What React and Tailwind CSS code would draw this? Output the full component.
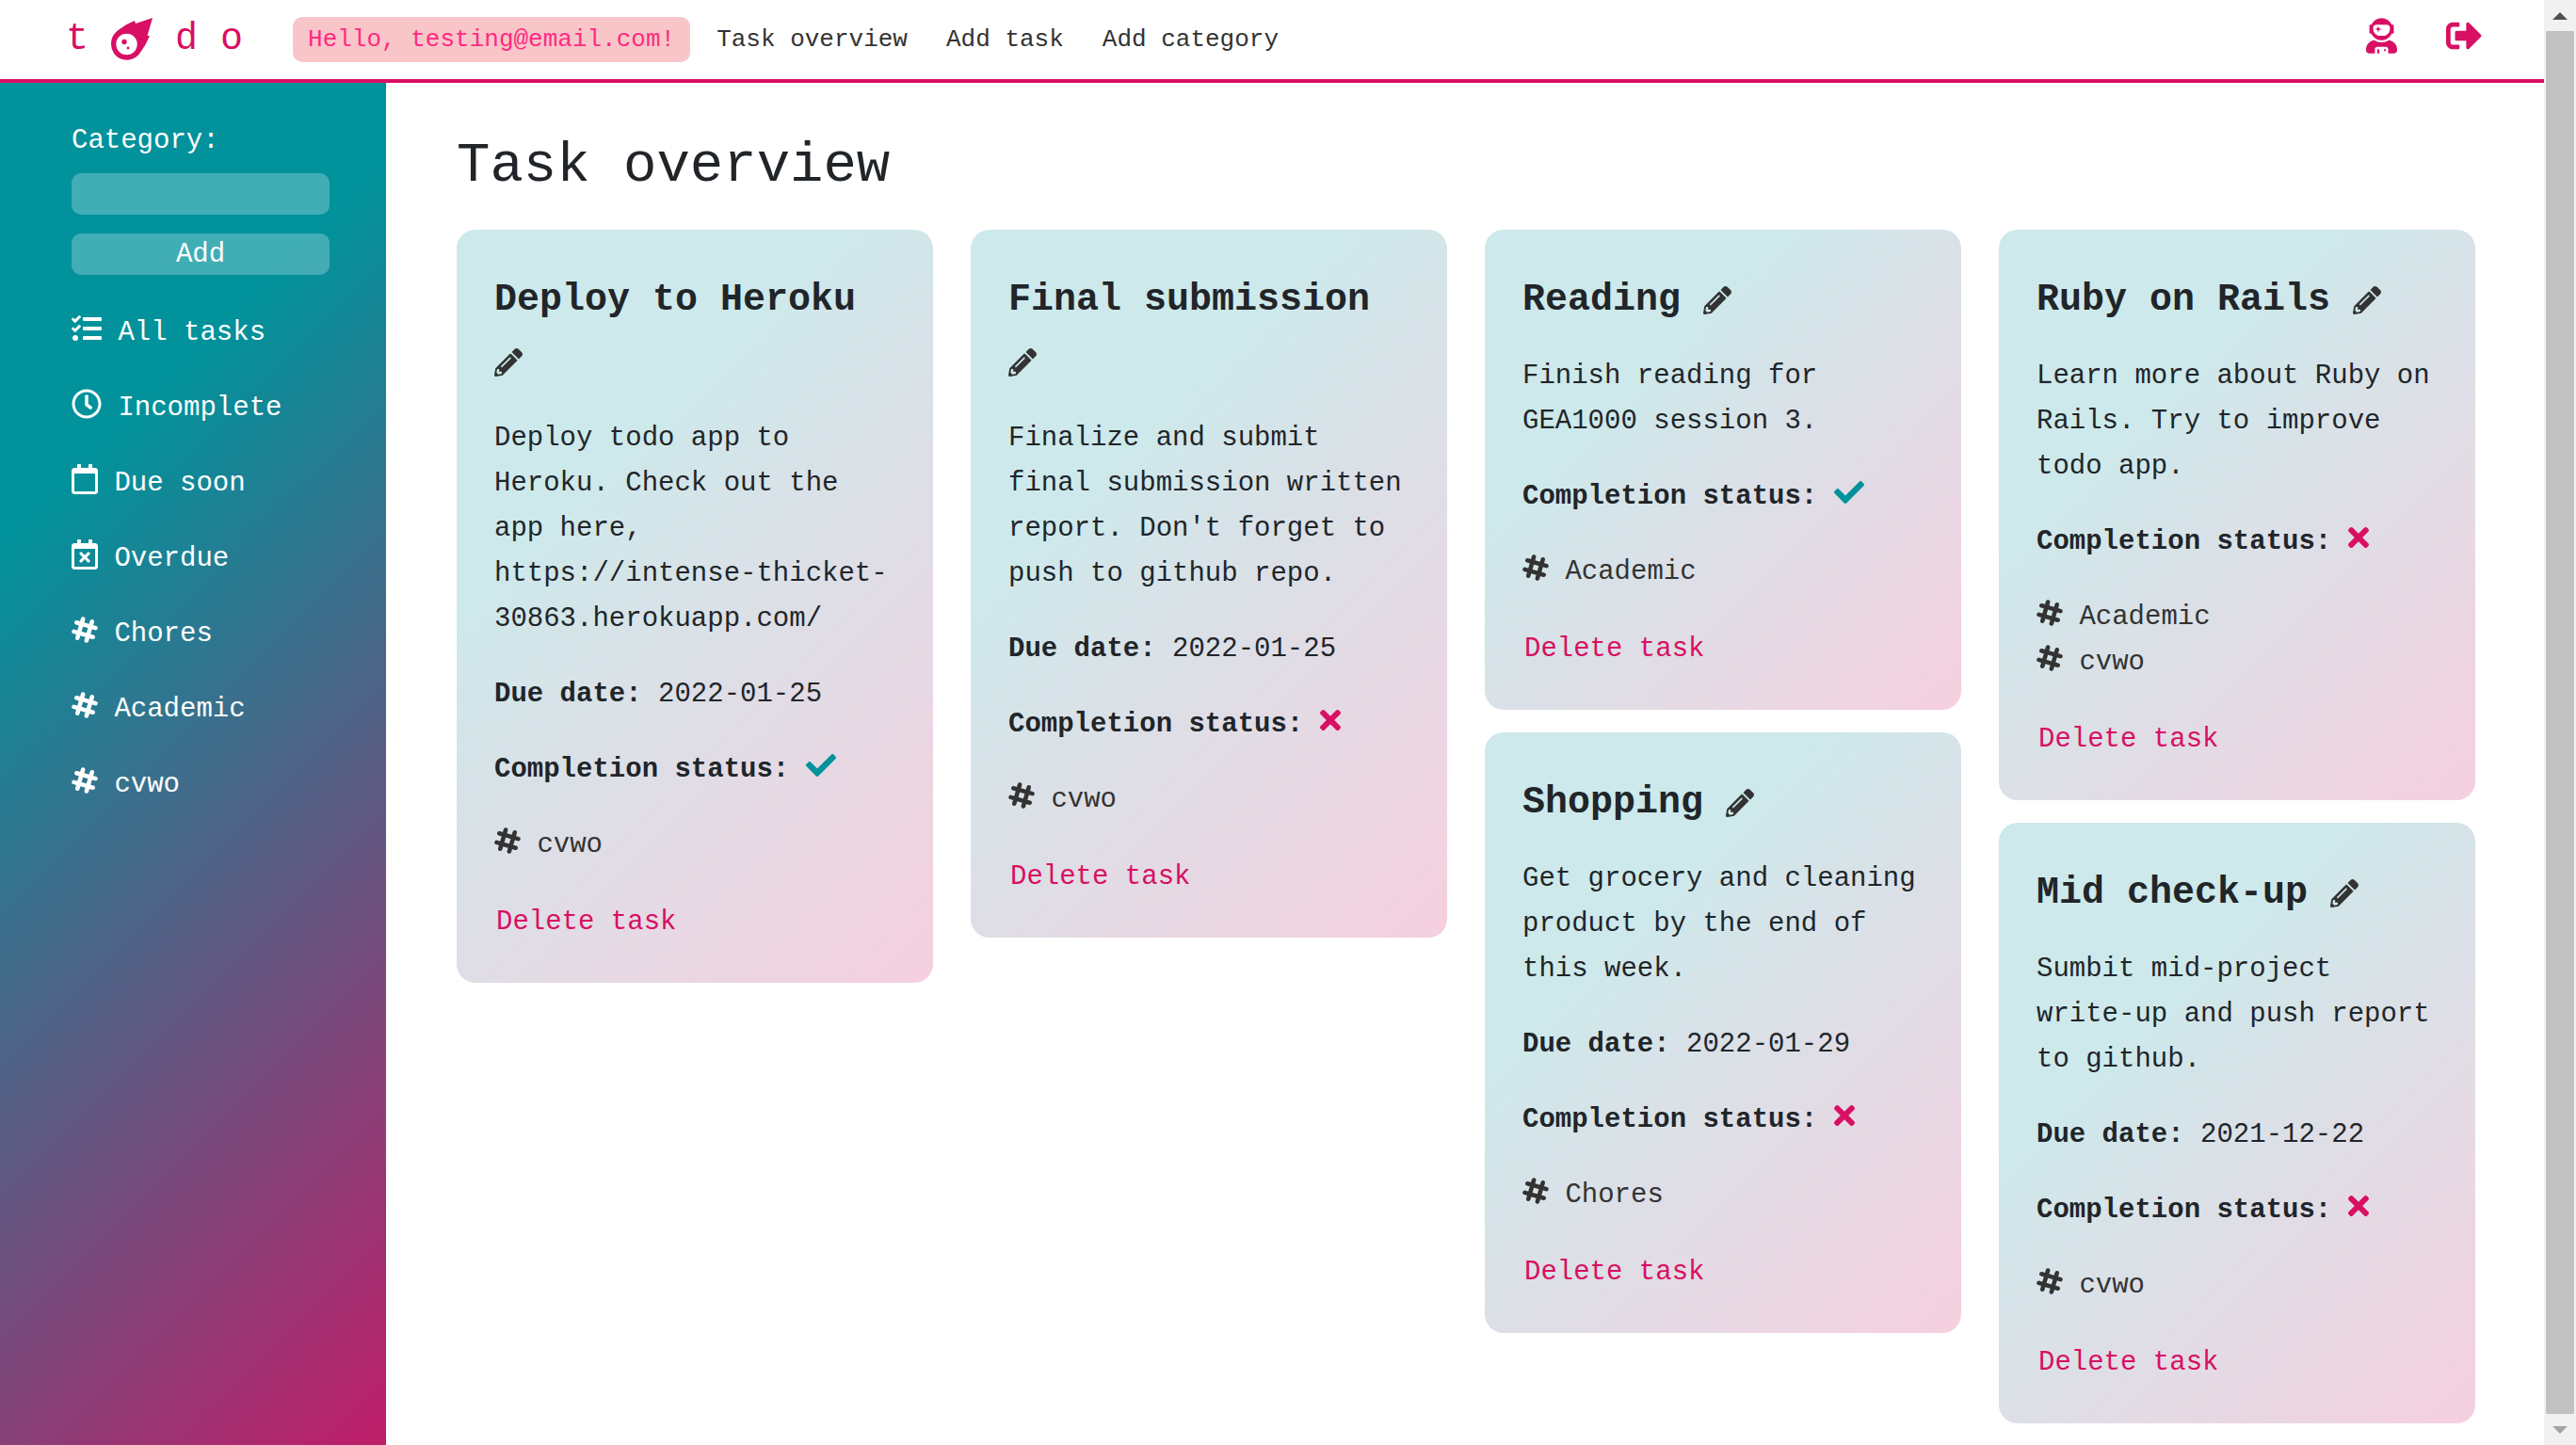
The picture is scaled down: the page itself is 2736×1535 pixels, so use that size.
import { FaCheck, FaPencilAlt, FaRegCalendar, FaRegCalendarTimes, FaRegClock, FaSignOutAlt, FaTasks, FaTimes, FaUserAstronaut } from "react-icons/fa";

const columns = [
  [
    {
      title: "Deploy to Heroku",
      text: "Deploy todo app to Heroku. Check out the app here, https://intense-thicket-30863.herokuapp.com/",
      due: "2022-01-25",
      done: true,
      tags: ["cvwo"],
    },
  ],
  [
    {
      title: "Final submission",
      text: "Finalize and submit final submission written report. Don't forget to push to github repo.",
      due: "2022-01-25",
      done: false,
      tags: ["cvwo"],
    },
  ],
  [
    { title: "Reading", text: "Finish reading for GEA1000 session 3.", done: true, tags: ["Academic"] },
    {
      title: "Shopping",
      text: "Get grocery and cleaning product by the end of this week.",
      due: "2022-01-29",
      done: false,
      tags: ["Chores"],
    },
  ],
  [
    {
      title: "Ruby on Rails",
      text: "Learn more about Ruby on Rails. Try to improve todo app.",
      done: false,
      tags: ["Academic", "cvwo"],
    },
    {
      title: "Mid check-up",
      text: "Sumbit mid-project write-up and push report to github.",
      due: "2021-12-22",
      done: false,
      tags: ["cvwo"],
    },
  ],
];

const iconBase = "inline-block align-[-4px]";

function HashIcon({ className }) {
  return (
    <svg viewBox="0 0 28 32" aria-hidden="true" className={className} fill="none" stroke="currentColor" strokeWidth="4.6" strokeLinecap="round">
      <g transform="rotate(16 14 16)">
        <path d="M3.500 11H24.500M3.500 21H24.500M9 5.500V26.500M19 5.500V26.500" />
      </g>
    </svg>
  );
}

const filters = [
  { label: "All tasks", Icon: FaTasks, size: "h-8 w-8" },
  { label: "Incomplete", Icon: FaRegClock, size: "h-8 w-8" },
  { label: "Due soon", Icon: FaRegCalendar, size: "h-8 w-7" },
  { label: "Overdue", Icon: FaRegCalendarTimes, size: "h-8 w-7" },
  { label: "Chores", Icon: HashIcon, size: "h-8 w-7" },
  { label: "Academic", Icon: HashIcon, size: "h-8 w-7" },
  { label: "cvwo", Icon: HashIcon, size: "h-8 w-7" },
];

function Meteor() {
  return (
    <svg viewBox="0 0 44 46" aria-hidden="true" className="h-[46px] w-11" fill="#d80f63">
      <path d="M25 3 L26 6 L44 0 L38.500 19 L41 19 Q37 29 30.500 37.500 A16.700 16.700 0 0 1 0 28 C0 20 4 15.500 9 12 Q17 6 25 3Z" />
      <circle cx="16.500" cy="28" r="11.200" fill="#fff" />
      <circle cx="14" cy="25.500" r="2.700" />
      <circle cx="18" cy="32" r="1.400" />
    </svg>
  );
}

function Header() {
  return (
    <header className="flex h-[88px] items-center border-b-4 border-[#d80f63] pr-[66px] pl-[70px] text-[26px] leading-[48px]">
      <a href="#home" aria-label="todo" className="flex items-center text-[40px] text-[#d80f63]">
        <span>t</span>
        <span className="mx-6">
          <Meteor />
        </span>
        <span>d</span>
        <span className="ml-6">o</span>
      </a>
      <p className="ml-[53px] rounded-[10px] bg-[#f8c5c9] px-4 text-[#ff2a80]">Hello, testing@email.com!</p>
      <nav className="ml-7 flex gap-[41px] text-[#333]">
        <a href="#overview">Task overview</a>
        <a href="#add-task">Add task</a>
        <a href="#add-category">Add category</a>
      </nav>
      <div className="ml-auto flex gap-[52px] pb-2 text-[#d80f63]">
        <a href="#profile" aria-label="Profile">
          <FaUserAstronaut className="h-[38px] w-[33px]" />
        </a>
        <a href="#logout" aria-label="Log out">
          <FaSignOutAlt className="h-[38px] w-[38px]" />
        </a>
      </div>
    </header>
  );
}

function Sidebar() {
  return (
    <aside className="w-[410px] shrink-0 bg-[linear-gradient(135deg,#02929b_27%,#d80f63_109%)] pt-[38px] pr-[60px] pl-[76px] text-white">
      <form className="flex flex-col" onSubmit={(e) => e.preventDefault()}>
        <label htmlFor="category">Category:</label>
        <input id="category" type="text" className="mt-[10px] h-11 rounded-[10px] bg-white/25 px-3 outline-none" />
        <button type="submit" className="mt-5 h-11 rounded-[10px] bg-white/25 leading-[46px]">
          Add
        </button>
      </form>
      <ul className="mt-[38px] flex flex-col gap-8">
        {filters.map(({ label, Icon, size }) => (
          <li key={label}>
            <a href={`#${label}`}>
              <Icon aria-hidden="true" className={`${iconBase} ${size}`} /> {label}
            </a>
          </li>
        ))}
      </ul>
    </aside>
  );
}

function TaskCard({ task }) {
  return (
    <article className="flex flex-col gap-8 rounded-[20px] bg-[linear-gradient(135deg,#cde9eb_30%,#f6cfdf)] px-10 pt-[42px] pb-[38px]">
      <div>
        <h2 className="mb-6 text-[40px] leading-[66px] font-bold">
          {task.title}{" "}
          <a href="#edit" aria-label={`Edit ${task.title}`} className="text-[#333]">
            <FaPencilAlt aria-hidden="true" className="inline-block h-[30px] w-[30px] align-[-5px]" />
          </a>
        </h2>
        <p>{task.text}</p>
      </div>
      {task.due && (
        <p>
          <strong>Due date:</strong> {task.due}
        </p>
      )}
      <p>
        <strong>Completion status:</strong>{" "}
        {task.done ? (
          <FaCheck role="img" aria-label="Complete" className={`${iconBase} h-8 w-8 text-[#02929b]`} />
        ) : (
          <FaTimes role="img" aria-label="Incomplete" className={`${iconBase} h-8 w-[22px] text-[#d80f63]`} />
        )}
      </p>
      <ul>
        {task.tags.map((tag) => (
          <li key={tag}>
            <a href={`#${tag}`} className="text-[#333]">
              <HashIcon className={`${iconBase} h-8 w-7`} /> {tag}
            </a>
          </li>
        ))}
      </ul>
      <button type="button" className="self-start px-0.5 py-0.5 text-[#d80f63]">
        Delete task
      </button>
    </article>
  );
}

function Scrollbar() {
  return (
    <div aria-hidden="true" className="flex w-[34px] shrink-0 flex-col items-center bg-[#f1f1f1]">
      <div className="flex h-[33px] items-center">
        <svg viewBox="0 0 16 8" className="h-2 w-4" fill="#505050">
          <path d="M0 8 L8 0 L16 8Z" />
        </svg>
      </div>
      <div className="w-[30px] grow bg-[#c1c1c1]" />
      <div className="flex h-[33px] items-center">
        <svg viewBox="0 0 16 8" className="h-2 w-4" fill="#a3a3a3">
          <path d="M0 0 L8 8 L16 0Z" />
        </svg>
      </div>
    </div>
  );
}

export default function App() {
  return (
    <div className="flex min-h-screen bg-white font-['Liberation_Mono',monospace] text-[29px] leading-[48px] text-[#212529]">
      <div className="flex grow flex-col">
        <Header />
        <div className="flex grow">
          <Sidebar />
          <main className="grow pt-[51px] pr-[73px] pb-[22px] pl-[75px]">
            <h1 className="text-[59px] leading-[76px]">Task overview</h1>
            <div className="mt-[29px] grid grid-cols-4 items-start gap-10">
              {columns.map((tasks) => (
                <div key={tasks[0].title} className="flex flex-col gap-6">
                  {tasks.map((task) => (
                    <TaskCard key={task.title} task={task} />
                  ))}
                </div>
              ))}
            </div>
          </main>
        </div>
      </div>
      <Scrollbar />
    </div>
  );
}
